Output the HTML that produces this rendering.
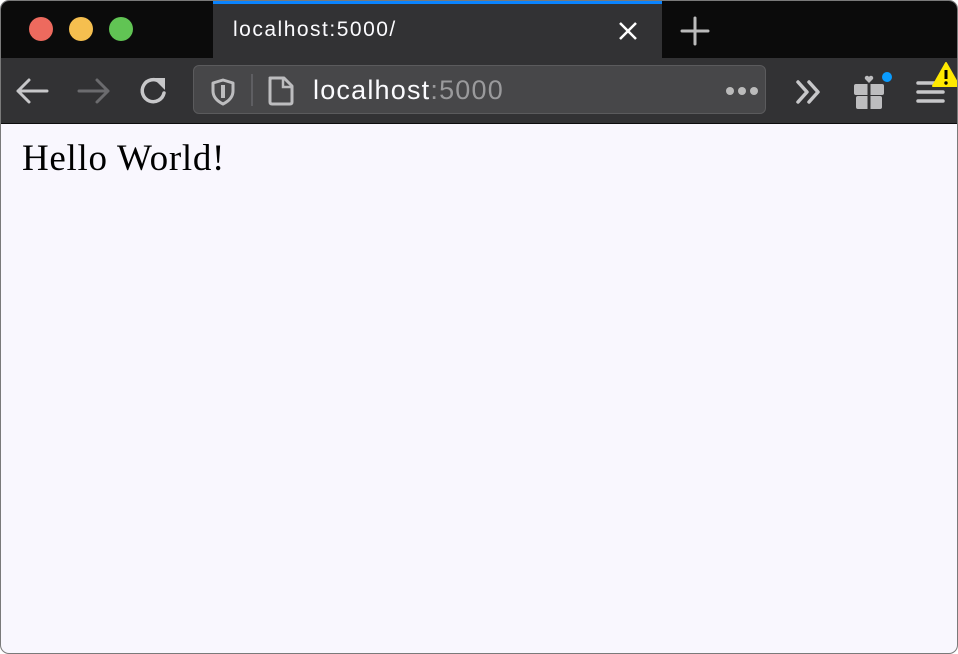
<!DOCTYPE html>
<html><head><style>
body{margin:0;width:958px;height:654px;overflow:hidden;background:#fff;font-family:"Liberation Sans",sans-serif;position:relative}
.win{position:absolute;left:0;top:0;width:956px;height:652px;border:1px solid #7a7a7a;border-radius:9px;overflow:hidden;background:#f9f7fe}
.title{position:absolute;left:0;top:0;width:100%;height:57px;background:#0b0b0b}
.dot{position:absolute;top:16px;width:24px;height:24px;border-radius:50%}
.tab{position:absolute;left:212px;top:0;width:449px;height:57px;background:#323234}
.tab:before{content:"";position:absolute;left:0;top:0;right:0;height:3px;background:#0a84ff}
.tool{position:absolute;left:0;top:57px;width:100%;height:65px;background:#323234;border-bottom:1px solid #0c0c0d}
.url{position:absolute;left:192px;top:7px;width:573px;height:49px;background:#474749;border:1px solid #5b5b5d;border-radius:6px;box-sizing:border-box}
svg{position:absolute}
</style></head><body>
<div class="win">
<div class="title">
<div class="dot" style="left:28px;background:#ed6a5e"></div>
<div class="dot" style="left:68px;background:#f5bf4f"></div>
<div class="dot" style="left:108px;background:#61c454"></div>
<div class="tab">
<div style="position:absolute;left:20px;top:17px;color:#fbfbfe;font-size:21px;letter-spacing:1.5px">localhost:5000/</div>
<svg style="left:404px;top:19px" width="22" height="22"><path d="M3 3L19 19M19 3L3 19" stroke="#fff" stroke-width="2.5"/></svg>
</div>
<svg style="left:679px;top:15px" width="30" height="30"><path d="M15 2V28M2 15H28" stroke="#bbb" stroke-width="3" stroke-linecap="round"/></svg>
</div>
<div class="tool">
<svg style="left:14px;top:19px" width="36" height="28"><path d="M3 14H32M14 3L3 14L14 25" stroke="#c7c7c9" stroke-width="3" fill="none" stroke-linecap="round" stroke-linejoin="round"/></svg>
<svg style="left:75px;top:19px" width="36" height="28"><path d="M3 14H32M21 3L32 14L21 25" stroke="#6b6b6e" stroke-width="3" fill="none" stroke-linecap="round" stroke-linejoin="round"/></svg>
<svg style="left:136px;top:17px" width="34" height="34"><path d="M27 18A11 11 0 1 1 23 7" stroke="#c7c7c9" stroke-width="3.5" fill="none" stroke-linecap="round"/><path d="M16 3H28V15Z" fill="#c7c7c9"/></svg>
<div class="url">
<svg style="left:16px;top:12px" width="26" height="28"><path d="M13 2L23 5V13C23 20 17 24 13 26C9 24 3 20 3 13V5Z" stroke="#bdbdbf" stroke-width="3" fill="none" stroke-linejoin="round"/><path d="M13 7V20" stroke="#bdbdbf" stroke-width="4"/></svg>
<div style="position:absolute;left:57px;top:8px;width:2px;height:32px;background:#5e5e62"></div>
<svg style="left:72px;top:9px" width="32" height="32"><path d="M4 3H18L26 11V27Q26 29 24 29H6Q4 29 4 27V5Q4 3 6 3Z" stroke="#bdbdbf" stroke-width="3" fill="none" stroke-linejoin="round"/><path d="M17 3V12H26" stroke="#bdbdbf" stroke-width="2.5" fill="none"/></svg>
<div style="position:absolute;left:119px;top:9px;font-size:27px;letter-spacing:1.2px;color:#fbfbfe">localhost<span style="color:#9a9a9c">:5000</span></div>
<svg style="left:530px;top:18px" width="36" height="14"><circle cx="6" cy="7" r="4" fill="#bbb"/><circle cx="18" cy="7" r="4" fill="#bbb"/><circle cx="30" cy="7" r="4" fill="#bbb"/></svg>
</div>
<svg style="left:794px;top:21px" width="30" height="26"><path d="M3 3L12 13L3 23M14 3L23 13L14 23" stroke="#c7c7c9" stroke-width="3.5" fill="none" stroke-linecap="round" stroke-linejoin="round"/></svg>
<svg style="left:852px;top:12px" width="44" height="40"><rect x="1" y="14" width="30" height="11" rx="2" fill="#bdbdbf"/><rect x="3" y="26" width="26" height="13" rx="2" fill="#bdbdbf"/><rect x="14.5" y="14" width="3" height="26" fill="#323234"/><path d="M16 13L12 9A2.2 2.2 0 0 1 16 7A2.2 2.2 0 0 1 20 9Z" fill="#bdbdbf"/><circle cx="34" cy="7" r="5" fill="#0a9cff"/></svg>
<svg style="left:914px;top:0px" width="44" height="50"><path d="M3 25H28M3 34H28M3 43H28" stroke="#c7c7c9" stroke-width="3.5" stroke-linecap="round"/><path d="M31 5L44 28H18Z" fill="#ffe900" stroke="#ffe900" stroke-width="2" stroke-linejoin="round"/><path d="M31 12V21" stroke="#000" stroke-width="3"/><circle cx="31" cy="25" r="1.7" fill="#000"/></svg>
</div>
<div style="position:absolute;left:21px;top:136px;font-family:'Liberation Serif',serif;font-size:37px;letter-spacing:0.7px;color:#000">Hello World!</div>
</div>
</body></html>
